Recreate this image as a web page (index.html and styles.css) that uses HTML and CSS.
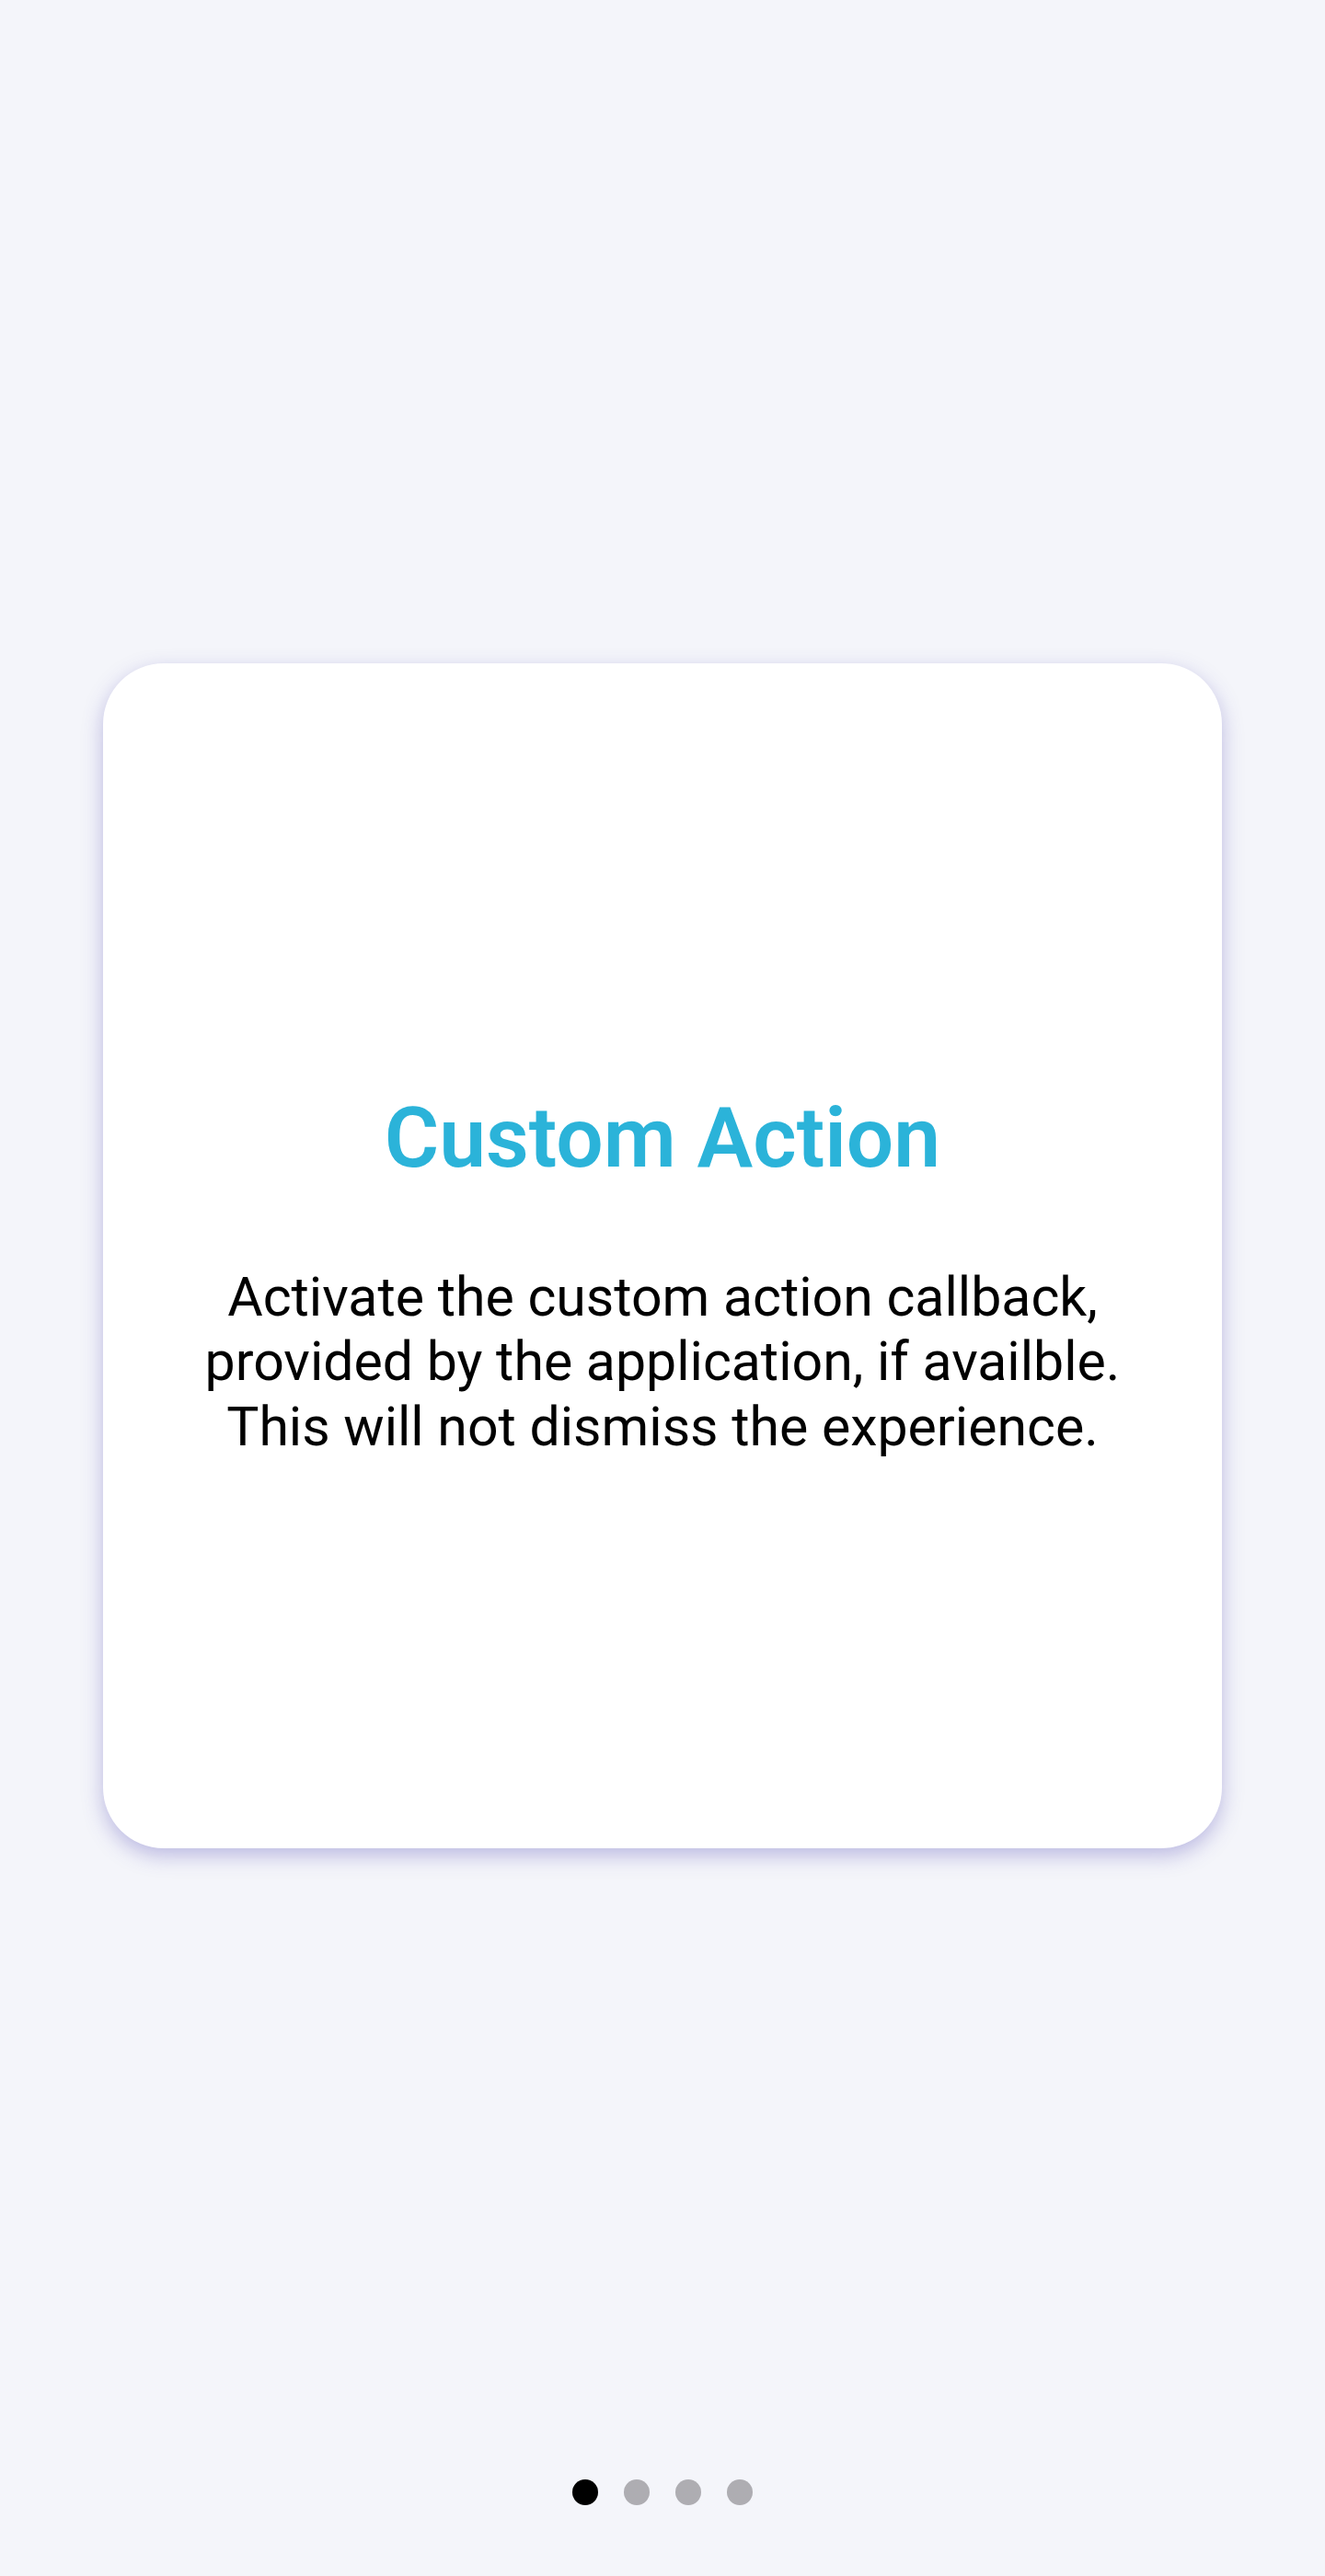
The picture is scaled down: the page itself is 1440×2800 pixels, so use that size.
FILE: index.html
```html
<!DOCTYPE html>
<html lang="en">
<head>
<meta charset="utf-8">
<title>Custom Action</title>
<link rel="stylesheet" href="styles.css">
</head>
<body>
<div class="screen">
  <main class="stage">
    <section class="card">
      <h1 class="title">Custom Action</h1>
      <p class="body">Activate the custom action callback,<br>provided by the application, if availble.<br>This will not dismiss the experience.</p>
    </section>
  </main>
  <nav class="pager">
    <span class="dot active"></span>
    <span class="dot"></span>
    <span class="dot"></span>
    <span class="dot"></span>
  </nav>
</div>
</body>
</html>
```
FILE: styles.css
```css
html, body {
  margin: 0;
  padding: 0;
  background: #f4f5fa;
}
.screen {
  height: 2800px;
  display: flex;
  flex-direction: column;
  font-family: Roboto, "Liberation Sans", sans-serif;
}
.stage {
  flex: 1;
  display: flex;
  align-items: center;
  justify-content: center;
  padding: 35px 112px 0;
}
.card {
  width: 100%;
  height: 1288px;
  box-sizing: border-box;
  background: #ffffff;
  border-radius: 66px;
  box-shadow: 0 8px 22px rgba(80, 70, 180, 0.34);
  display: flex;
  flex-direction: column;
  align-items: center;
  justify-content: center;
  padding-top: 40px;
  text-align: center;
}
.title {
  margin: 0;
  font-size: 91px;
  line-height: 107px;
  font-weight: 600;
  color: #2bb3d9;
}
.body {
  margin: 84px 0 0;
  font-size: 59px;
  line-height: 70.5px;
  font-weight: 400;
  color: #000000;
}
.pager {
  display: flex;
  justify-content: center;
  gap: 28px;
  padding-bottom: 77px;
}
.dot {
  width: 28px;
  height: 28px;
  border-radius: 50%;
  background: #aeadb2;
}
.dot.active {
  background: #000000;
}
```
